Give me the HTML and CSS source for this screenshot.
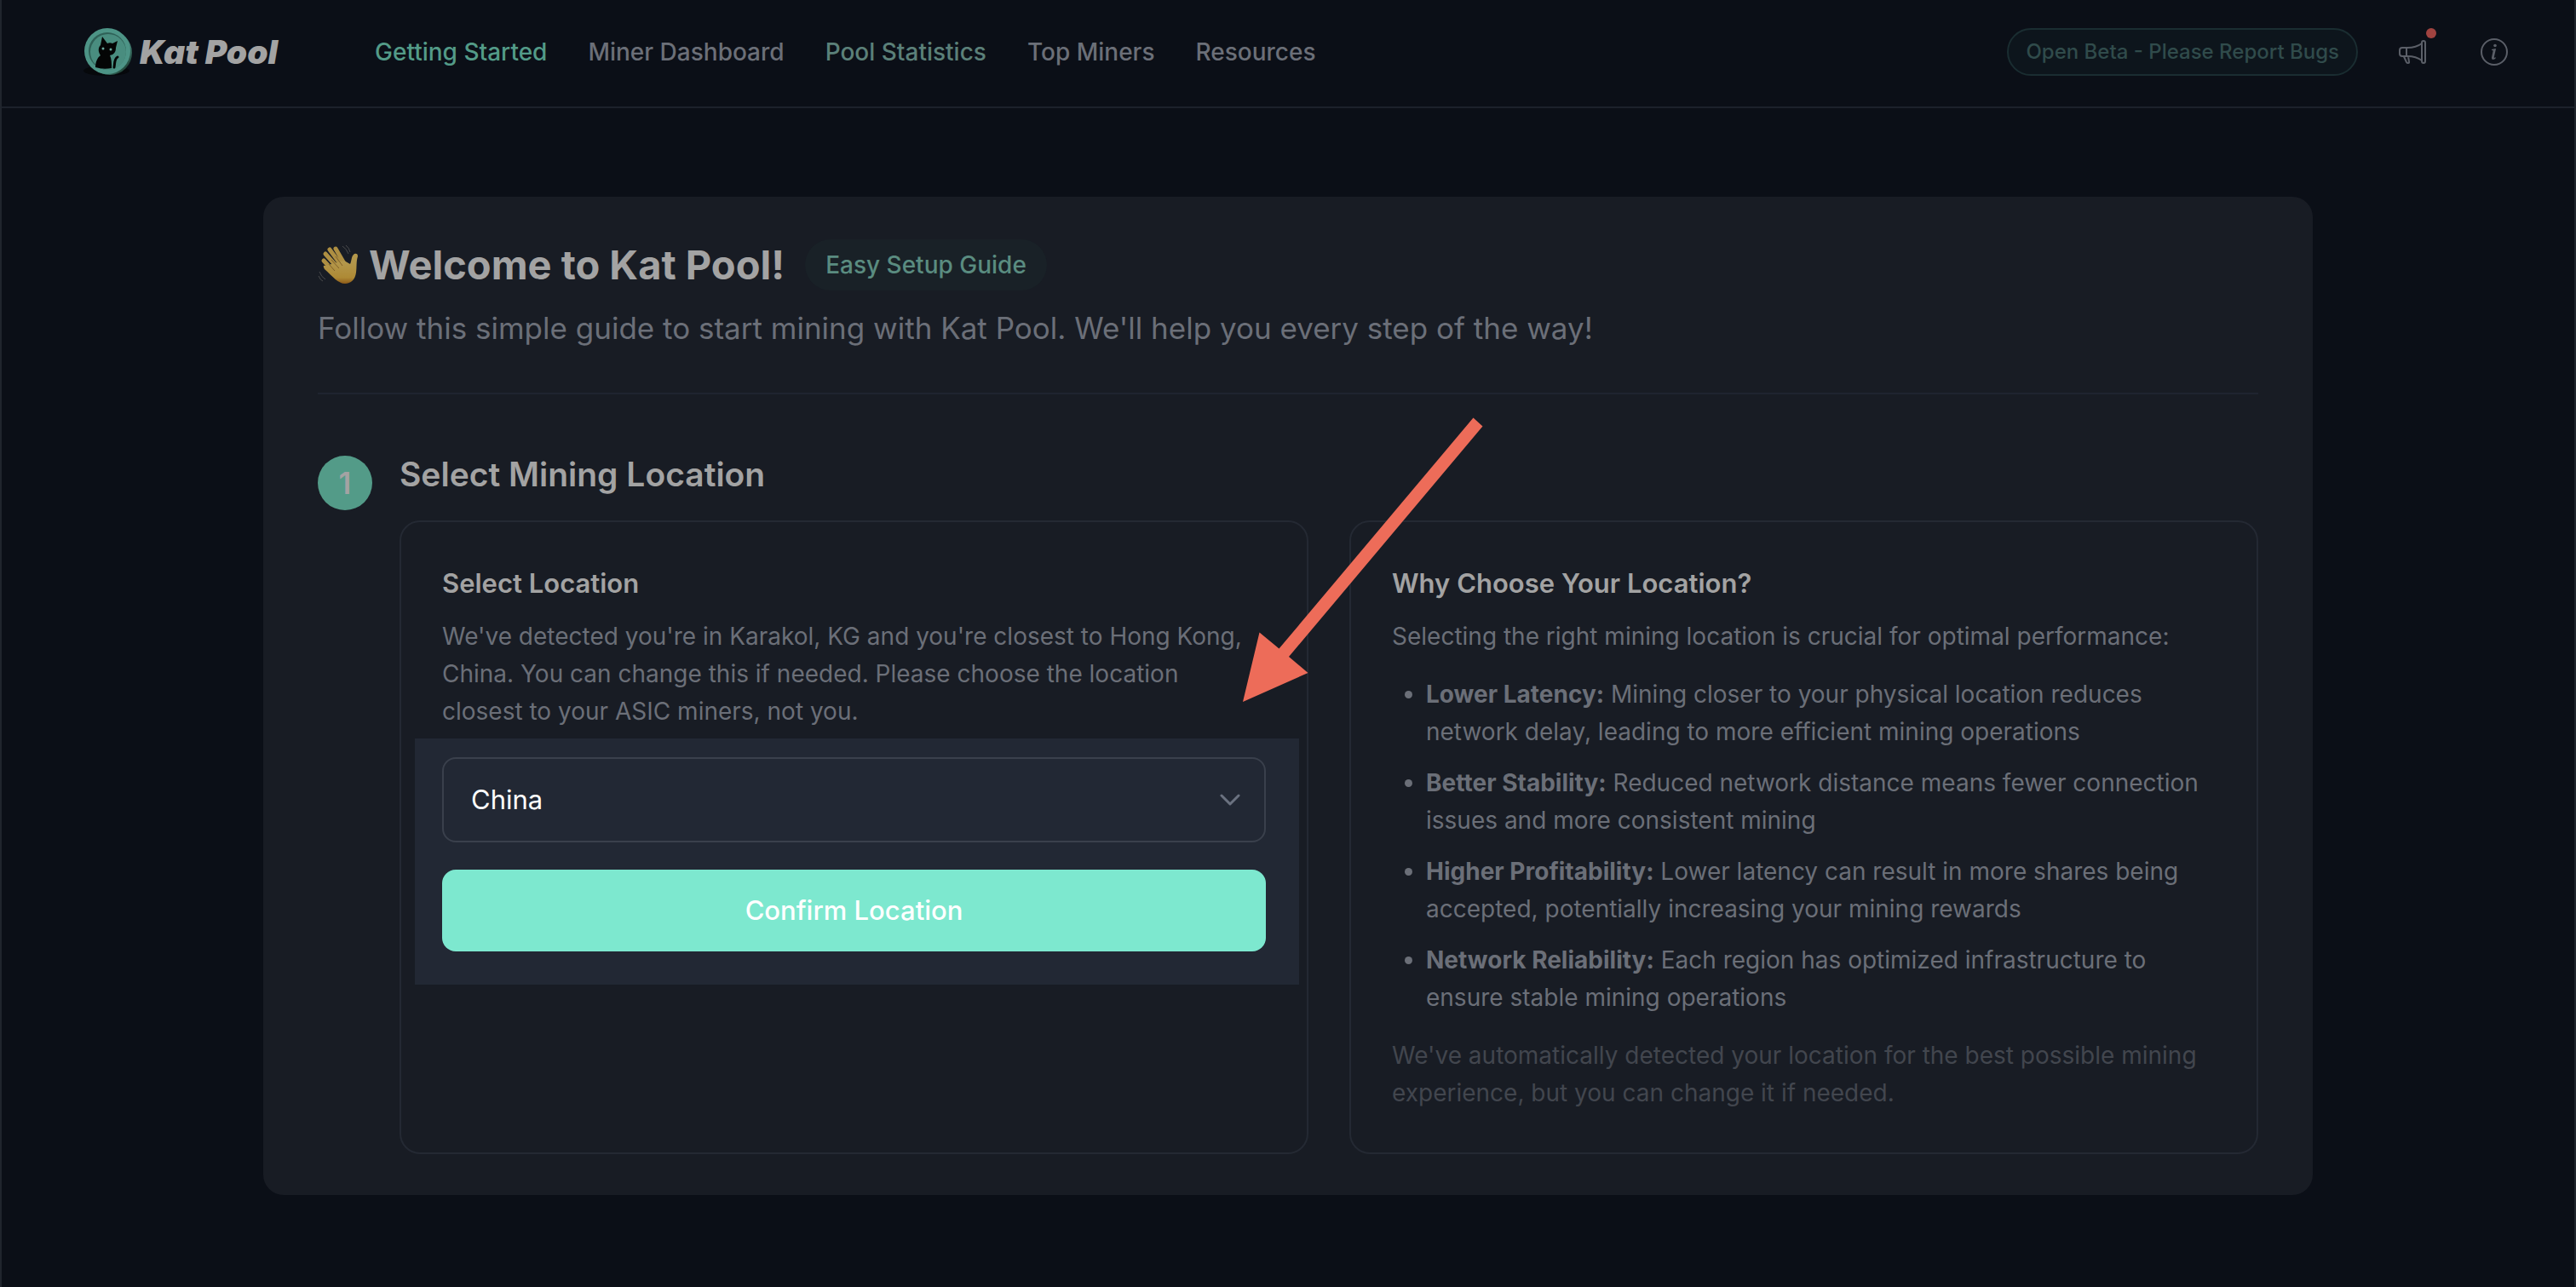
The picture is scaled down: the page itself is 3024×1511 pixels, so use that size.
FILE: index.html
```html
<!DOCTYPE html>
<html lang="en">
<head>
<meta charset="utf-8">
<title>Kat Pool - Getting Started</title>
<meta name="viewport" content="width=device-width, initial-scale=1">
<link rel="stylesheet" href="styles.css">
</head>
<body>
<div class="page">
  <header class="topbar">
    <a class="brand" href="#">
      <svg class="brand-coin" viewBox="0 0 60 60" aria-hidden="true">
        <defs>
          <linearGradient id="coin-edge" x1="0" y1="0" x2="1" y2="1">
            <stop offset="0.6" stop-color="#478579"/>
            <stop offset="1" stop-color="#0d2418"/>
          </linearGradient>
        </defs>
        <ellipse cx="27" cy="52" rx="27" ry="6" fill="#06080b"/>
        <circle cx="31" cy="31" r="26" fill="url(#coin-edge)"/>
        <circle cx="28" cy="29" r="27" fill="#4d9486"/>
        <circle cx="28" cy="29" r="22" fill="#2f6157"/>
        <circle cx="29" cy="30" r="21" fill="#498d7f"/>
        <path d="M14 48 C14 42 16 37 20 34 C17 30 17 25 20 22 L22 12 L28 20 C30 19 32 19 34 20 L40 17 L38 25 C38 30 36 33 31 34 C33 38 33 43 33 49 Q23 51 14 48 Z" fill="#040505"/>
        <path d="M36 48 C37 43 36 38 40 36" fill="none" stroke="#040505" stroke-width="3" stroke-linecap="round"/>
        <circle cx="23" cy="26" r="1.500" fill="#6aa79c"/>
        <circle cx="32" cy="27" r="1.500" fill="#6aa79c"/>
      </svg>
      <span class="brand-name">Kat Pool</span>
    </a>
    <nav class="nav" aria-label="Main">
      <a class="nav-link nav-link-active" href="#">Getting Started</a>
      <a class="nav-link" href="#">Miner Dashboard</a>
      <a class="nav-link nav-link-accent" href="#">Pool Statistics</a>
      <a class="nav-link" href="#">Top Miners</a>
      <a class="nav-link" href="#">Resources</a>
    </nav>
    <div class="actions">
      <a class="beta" href="#">Open Beta - Please Report Bugs</a>
      <button class="icon-button" type="button" aria-label="Announcements">
        <svg class="icon" viewBox="0 0 36 36" aria-hidden="true">
          <path d="M12 13 H6 Q3 13 3 16 V20 Q3 23 6 23 H12 M11 13 V23 M12 13 C19 13 25 11 29 8 M12 23 C19 23 25 25 29 28 M8 23.500 L11 30 Q11.500 31 13 31 Q14.500 31 14 29 L13 23.500"/>
          <rect x="29" y="5" width="4" height="26" rx="2"/>
        </svg>
        <span class="dot"></span>
      </button>
      <button class="icon-button" type="button" aria-label="Information">
        <svg class="icon" viewBox="0 0 36 36" aria-hidden="true">
          <circle cx="18" cy="18" r="15"/>
          <path class="icon-fill" d="M15 15 L19.500 14 L20 14.500 L17.800 24 Q17.600 25.500 19.500 24.300 L20 25 Q18.500 27 16.500 27 Q14.500 26.800 15 24.500 L16.700 16.500 Q16.700 15.900 15 16 Z"/>
          <circle class="icon-fill" cx="19" cy="10.500" r="1.800"/>
        </svg>
      </button>
    </div>
  </header>

  <main class="main">
    <section class="guide">
      <div class="guide-head">
        <div class="title-row">
          <h1 class="title"><svg class="wave" viewBox="0 0 48 48" aria-hidden="true">
            <defs>
              <linearGradient id="hand" x1="0" y1="0" x2="0" y2="1">
                <stop offset="0.3" stop-color="#b3974b"/>
                <stop offset="0.8" stop-color="#ae8a35"/>
                <stop offset="1" stop-color="#8d5a18"/>
              </linearGradient>
            </defs>
            <path d="M20 33 L7 19 M24 28 L9 11 M28 25 L14 6 M32 24 L21 5" fill="none" stroke="#ae8f42" stroke-width="5" stroke-linecap="round"/>
            <path d="M9 25 L31 19 L38 23 C40 19 39 14 43 11 Q47 10 47 14 C45 20 46 26 45 33 C44 41 39 46 32 46 C24 46 18 38 8 29 Q5 24 9 25 Z" fill="url(#hand)"/>
            <path d="M13 23 L20 31 M16 18 L25 28 M21 14 L29 25" fill="none" stroke="#82612a" stroke-width="1"/>
            <path d="M2 32 Q4 38 9 41 M1 37 Q3 42 6 43 M29 2 Q34 5 36 11 M33 1 Q37 4 38 9" fill="none" stroke="#4a4b4d" stroke-width="1"/>
          </svg>Welcome to Kat Pool!</h1>
          <span class="badge">Easy Setup Guide</span>
        </div>
        <p class="subtitle">Follow this simple guide to start mining with Kat Pool. We'll help you every step of the way!</p>
      </div>

      <div class="step">
        <span class="step-number">1</span>
        <div class="step-body">
          <h2 class="step-title">Select Mining Location</h2>
          <div class="panels">
            <section class="panel">
              <h3 class="panel-title">Select Location</h3>
              <p class="text text-intro">We've detected you're in Karakol, KG and you're closest to Hong Kong, China. You can change this if needed. Please choose the location closest to your ASIC miners, not you.</p>
              <form class="location-form">
                <div class="select-wrap">
                  <select class="select" aria-label="Mining location">
                    <option>China</option>
                  </select>
                  <svg class="chevron" viewBox="0 0 24 24" aria-hidden="true"><path d="M2 7 L12 17 L22 7"/></svg>
                </div>
                <button class="confirm" type="button">Confirm Location</button>
              </form>
              <svg class="arrow" viewBox="0 0 282 334" aria-hidden="true">
                <path d="M270.500 0.500 L281.500 10.500 L54 281 L76.500 300 L0 334 L19.500 252.500 L42.500 271.500 Z"/>
              </svg>
            </section>
            <section class="panel">
              <h3 class="panel-title">Why Choose Your Location?</h3>
              <p class="text">Selecting the right mining location is crucial for optimal performance:</p>
              <ul class="reasons">
                <li><strong>Lower Latency:</strong> Mining closer to your physical location reduces network delay, leading to more efficient mining operations</li>
                <li><strong>Better Stability:</strong> Reduced network distance means fewer connection issues and more consistent mining</li>
                <li><strong>Higher Profitability:</strong> Lower latency can result in more shares being accepted, potentially increasing your mining rewards</li>
                <li><strong>Network Reliability:</strong> Each region has optimized infrastructure to ensure stable mining operations</li>
              </ul>
              <p class="text text-faint">We've automatically detected your location for the best possible mining experience, but you can change it if needed.</p>
            </section>
          </div>
        </div>
      </div>
    </section>
  </main>
</div>
</body>
</html>
```
FILE: styles.css
```css
* {
  box-sizing: border-box;
}

body {
  margin: 0;
  background: #0b0f17;
  color: #a3a3a3;
  font-family: Inter, "Liberation Sans", sans-serif;
  font-size: 28px;
  line-height: 44px;
}

h1, h2, h3, p, ul {
  margin: 0;
}

a {
  text-decoration: none;
}

.page {
  min-height: 100vh;
  border: solid #20252d;
  border-width: 0 2px;
}

.topbar {
  display: flex;
  align-items: center;
  padding: 31px 62px 34px 96px;
  border-bottom: 2px solid #1c212b;
}

.brand {
  display: flex;
  align-items: center;
  gap: 6px;
  color: #a3a3a3;
}

.brand-coin {
  width: 60px;
  height: 60px;
}

.brand-name {
  font-size: 39px;
  font-weight: 900;
  font-style: italic;
}

.nav {
  display: flex;
  gap: 48px;
  margin-left: 114px;
}

.nav-link {
  color: #6b6f78;
  font-weight: 500;
}

.nav-link-active {
  color: #539b88;
}

.nav-link-accent {
  color: #5b8079;
}

.actions {
  display: flex;
  align-items: center;
  gap: 32px;
  margin-left: auto;
}

.beta {
  padding: 4px 20px;
  border: 2px solid #1a2d31;
  border-radius: 28px;
  background: #0d151c;
  color: #304b4b;
  font-size: 24px;
  font-weight: 500;
}

.icon-button {
  position: relative;
  display: flex;
  align-items: center;
  justify-content: center;
  width: 64px;
  height: 56px;
  padding: 0;
  border: 0;
  background: none;
}

.icon {
  width: 36px;
  height: 36px;
  fill: none;
  stroke: #5b5f68;
  stroke-width: 2;
  stroke-linejoin: round;
  stroke-linecap: round;
}

.icon-fill {
  fill: #5b5f68;
  stroke: none;
}

.dot {
  position: absolute;
  top: 0;
  right: 4px;
  width: 12px;
  height: 12px;
  border-radius: 50%;
  background: #a14340;
}

.main {
  padding: 104px 307px;
}

.guide {
  padding: 48px 64px;
  border-radius: 24px;
  background: #181c24;
}

.guide-head {
  padding-bottom: 48px;
  border-bottom: 2px solid #1f2430;
}

.title-row {
  display: flex;
  align-items: center;
  gap: 24px;
}

.title {
  display: flex;
  align-items: center;
  gap: 12px;
  font-size: 47px;
  line-height: 64px;
  font-weight: 700;
}

.wave {
  width: 48px;
  height: 48px;
}

.badge {
  padding: 8px 24px;
  border-radius: 30px;
  background: #192127;
  color: #5a8c80;
  font-weight: 500;
}

.subtitle {
  margin-top: 14px;
  color: #6b6f78;
  font-size: 35px;
  line-height: 56px;
}

.step {
  display: flex;
  gap: 32px;
  padding-top: 64px;
}

.step-number {
  display: flex;
  flex: none;
  align-items: center;
  justify-content: center;
  width: 64px;
  height: 64px;
  margin-top: 8px;
  border-radius: 50%;
  background: #539b88;
  font-size: 35px;
  font-weight: 600;
}

.step-body {
  flex: 1;
}

.step-title {
  font-size: 39px;
  line-height: 60px;
  font-weight: 600;
}

.panels {
  display: grid;
  grid-template-columns: 1fr 1fr;
  gap: 48px;
  margin-top: 24px;
}

.panel {
  position: relative;
  padding: 48px;
  border: 2px solid #242933;
  border-radius: 24px;
}

.panel-title {
  margin-bottom: 16px;
  font-size: 31px;
  line-height: 48px;
  font-weight: 600;
}

.text {
  color: #6b6f78;
}

.text-intro {
  padding-right: 16px;
}

.text-faint {
  color: #42464e;
}

.location-form {
  display: flex;
  flex-direction: column;
  gap: 32px;
  margin: 10px -39px 0 -32px;
  padding: 22px 39px 39px 32px;
  background: #222834;
}

.select-wrap {
  position: relative;
}

.select {
  display: block;
  width: 100%;
  height: 100px;
  padding: 0 32px;
  appearance: none;
  border: 2px solid #3a404c;
  border-radius: 16px;
  background: #222834;
  color: #fff;
  font: inherit;
  font-size: 31px;
}

.chevron {
  position: absolute;
  top: 38px;
  right: 30px;
  width: 24px;
  height: 24px;
  fill: none;
  stroke: #6b7280;
  stroke-width: 3;
  stroke-linecap: round;
  stroke-linejoin: round;
  pointer-events: none;
}

.confirm {
  height: 96px;
  padding: 0 32px;
  border: 0;
  border-radius: 16px;
  background: #7de8cf;
  color: #fff;
  font: inherit;
  font-size: 31px;
  font-weight: 500;
}

.arrow {
  position: absolute;
  z-index: 1;
  top: -123px;
  right: -207px;
  width: 282px;
  height: 334px;
  fill: #ed6c59;
  pointer-events: none;
}

.reasons {
  display: grid;
  gap: 16px;
  margin: 24px 0;
  padding-left: 40px;
  color: #6b6f78;
}

.reasons strong {
  font-weight: 700;
}
```
